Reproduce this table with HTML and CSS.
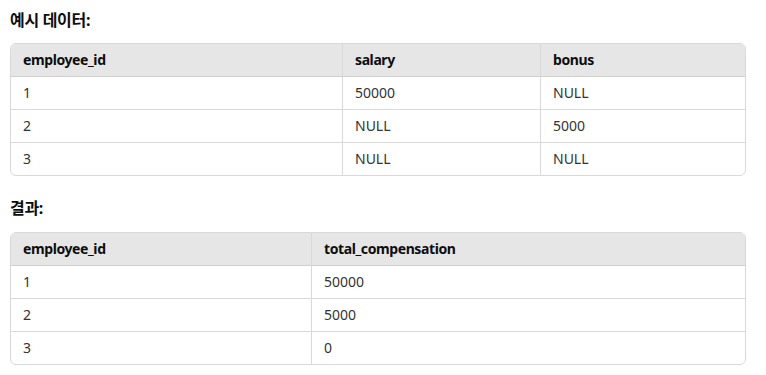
FILE: index.html
```html
<!DOCTYPE html>
<html lang="ko">
<head>
<meta charset="utf-8">
<link rel="stylesheet" href="styles.css">
</head>
<body>
<h3 class="title">예시 데이터:</h3>
<div class="tbl-wrap">
<table class="tbl t1">
<thead><tr><th class="c1">employee_id</th><th class="c2">salary</th><th>bonus</th></tr></thead>
<tbody>
<tr><td class="c1">1</td><td class="c2">50000</td><td>NULL</td></tr>
<tr><td class="c1">2</td><td class="c2">NULL</td><td>5000</td></tr>
<tr><td class="c1">3</td><td class="c2">NULL</td><td>NULL</td></tr>
</tbody>
</table>
</div>
<h3 class="title second">결과:</h3>
<div class="tbl-wrap">
<table class="tbl t2">
<thead><tr><th class="c1">employee_id</th><th>total_compensation</th></tr></thead>
<tbody>
<tr><td class="c1">1</td><td>50000</td></tr>
<tr><td class="c1">2</td><td>5000</td></tr>
<tr><td class="c1">3</td><td>0</td></tr>
</tbody>
</table>
</div>
</body>
</html>
```
FILE: styles.css
```css
html, body { margin: 0; padding: 0; background: #fff; }
body {
  padding: 8px 20px 0 10px;
  font-family: "Noto Sans", "Noto Sans CJK KR", sans-serif;
  color: #0d0d0d;
}
.title {
  margin: 0;
  font-size: 16px;
  line-height: 24px;
  font-weight: 700;
  letter-spacing: -0.3px;
}
.title.second { margin-top: 20px; }
.tbl-wrap {
  margin-top: 11px;
  border: 1px solid #d9d9d9;
  border-radius: 6px;
  overflow: hidden;
}
.second + .tbl-wrap { margin-top: 12px; }
.tbl {
  width: 100%;
  border-collapse: separate;
  border-spacing: 0;
  table-layout: fixed;
  font-size: 14px;
}
.tbl th, .tbl td {
  height: 32px;
  padding: 0 12px;
  text-align: left;
  vertical-align: middle;
  border-bottom: 1px solid #d9d9d9;
  box-sizing: content-box;
  line-height: 20px;
}
.tbl th {
  background: #e6e6e6;
  font-weight: 700;
  color: #0d0d0d;
  letter-spacing: -0.4px;
  border-bottom-color: #cfcfcf;
}
.tbl td { color: #333; }
.tbl tbody tr:last-child td { border-bottom: none; }
.tbl .c1, .tbl .c2 { border-right: 1px solid #d9d9d9; }
.t1 .c1 { width: 307px; }
.t1 .c2 { width: 173px; }
.t2 .c1 { width: 276px; }
```
